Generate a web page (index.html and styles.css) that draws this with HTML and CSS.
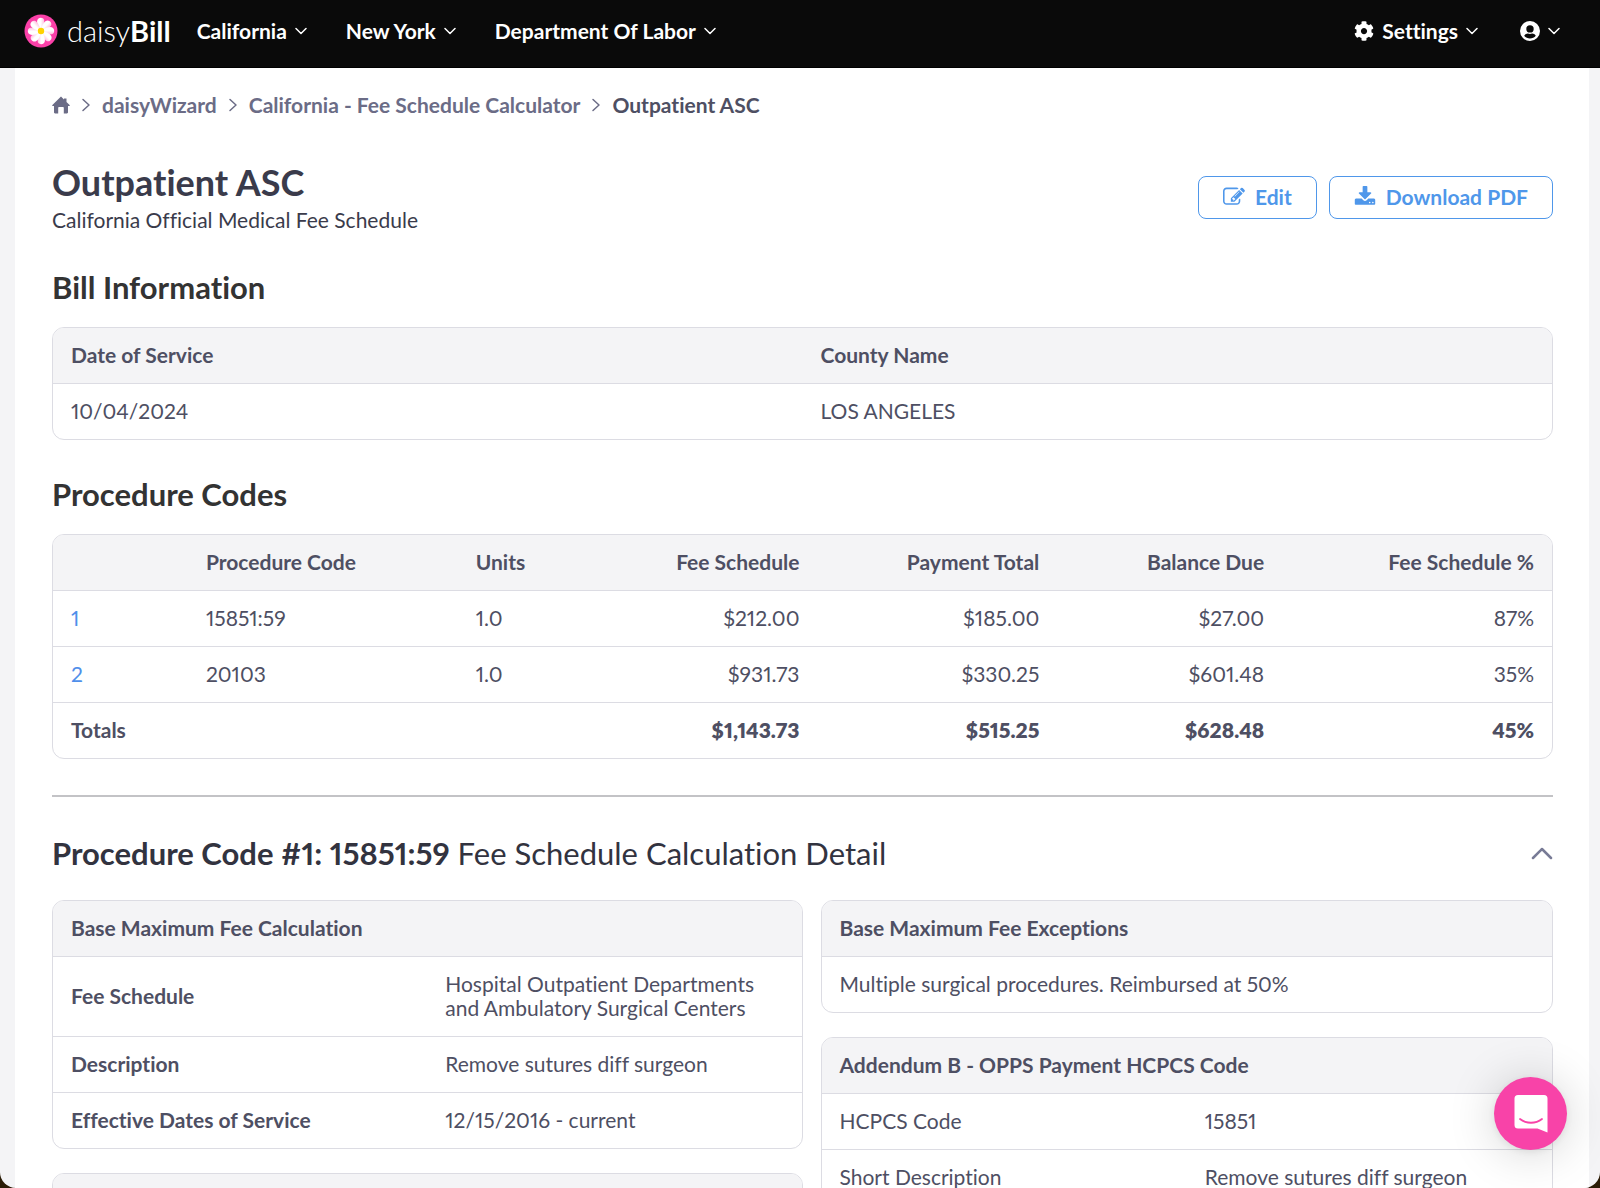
FILE: index.html
```html
<!DOCTYPE html>
<html lang="en">
<head>
<meta charset="utf-8">
<meta name="viewport" content="width=device-width, initial-scale=1">
<title>Outpatient ASC - daisyBill</title>
<link rel="stylesheet" href="styles.css">
</head>
<body>
<svg width="0" height="0" class="defs" aria-hidden="true">
  <symbol id="chevron-down" viewBox="0 0 12 12"><path d="M1 3.500l5 5 5-5" fill="none" stroke="currentColor" stroke-width="1.500" stroke-linecap="round" stroke-linejoin="round"/></symbol>
  <symbol id="chevron-right" viewBox="0 0 10 14"><path d="M2 1.500l6 5.500-6 5.500" fill="none" stroke="currentColor" stroke-width="1.500" stroke-linecap="round" stroke-linejoin="round"/></symbol>
</svg>
<div class="app">
  <header class="topbar">
    <a class="brand" href="#" aria-label="daisyBill">
      <svg class="brand-mark" viewBox="0 0 34 34" aria-hidden="true">
        <defs><linearGradient id="petal" x1="0" y1="0" x2="1" y2="0"><stop offset="0" stop-color="#fff"/><stop offset=".5" stop-color="#fff"/><stop offset="1" stop-color="#ffbfe0"/></linearGradient>
        <path id="leaf" d="M17 17C13 12 12 7 14.200 4.800C16 3.200 19.400 3.600 20.200 6C20.800 9 19.200 13.500 17 17z" fill="url(#petal)"/></defs>
        <circle cx="17" cy="17" r="16.500" fill="#fb40a8"/>
        <use href="#leaf"/><use href="#leaf" transform="rotate(45 17 17)"/><use href="#leaf" transform="rotate(90 17 17)"/><use href="#leaf" transform="rotate(135 17 17)"/><use href="#leaf" transform="rotate(180 17 17)"/><use href="#leaf" transform="rotate(225 17 17)"/><use href="#leaf" transform="rotate(270 17 17)"/><use href="#leaf" transform="rotate(315 17 17)"/>
        <circle cx="17" cy="17" r="3.200" fill="#ffd200"/>
      </svg>
      <span class="brand-name">daisy<b>Bill</b></span>
    </a>
    <nav class="menu menu-main" aria-label="Main">
      <button type="button" class="menu-item">California<svg class="caret"><use href="#chevron-down"/></svg></button>
      <button type="button" class="menu-item">New York<svg class="caret"><use href="#chevron-down"/></svg></button>
      <button type="button" class="menu-item">Department Of Labor<svg class="caret"><use href="#chevron-down"/></svg></button>
    </nav>
    <div class="menu">
      <button type="button" class="menu-item"><svg class="menu-icon" viewBox="0 0 512 512" aria-hidden="true"><path fill="currentColor" d="M487.400 315.700l-42.600-24.600c4.300-23.200 4.300-47 0-70.200l42.600-24.600c4.900-2.800 7.100-8.600 5.500-14-11.100-35.600-30-67.800-54.700-94.600-3.800-4.100-10-5.100-14.800-2.300L380.800 110c-17.900-15.400-38.500-27.300-60.800-35.100V25.800c0-5.600-3.900-10.500-9.400-11.700-36.700-8.200-74.300-7.800-109.200 0-5.500 1.200-9.400 6.100-9.400 11.700V75c-22.200 7.900-42.800 19.800-60.800 35.100L88.700 85.500c-4.900-2.800-11-1.900-14.800 2.300-24.700 26.700-43.600 58.900-54.700 94.600-1.700 5.400.6 11.200 5.500 14L67.300 221c-4.300 23.200-4.300 47 0 70.200l-42.600 24.600c-4.900 2.800-7.100 8.600-5.500 14 11.100 35.600 30 67.800 54.700 94.600 3.800 4.100 10 5.100 14.800 2.300l42.600-24.600c17.900 15.400 38.500 27.300 60.800 35.100v49.200c0 5.600 3.900 10.500 9.400 11.700 36.700 8.200 74.300 7.800 109.200 0 5.500-1.200 9.400-6.100 9.400-11.700v-49.200c22.200-7.900 42.800-19.800 60.800-35.100l42.600 24.600c4.900 2.800 11 1.900 14.800-2.300 24.700-26.700 43.600-58.900 54.700-94.600 1.500-5.500-.7-11.300-5.600-14.100zM256 336c-44.100 0-80-35.900-80-80s35.900-80 80-80 80 35.900 80 80-35.900 80-80 80z"/></svg>Settings<svg class="caret"><use href="#chevron-down"/></svg></button>
      <button type="button" class="menu-item" aria-label="Account"><svg class="menu-icon" viewBox="0 0 20 20" aria-hidden="true"><path fill="currentColor" fill-rule="evenodd" d="M10 0a10 10 0 1 0 0 20a10 10 0 0 0 0-20zM10 4.200a3.700 3.700 0 1 1 0 7.400a3.700 3.700 0 0 1 0-7.400zM4.200 14.700c.9-1.500 2.300-2.200 3.700-2.200c1.400.5 2.800.5 4.200 0c1.400 0 2.800.7 3.700 2.200c-2.800 3.600-8.800 3.600-11.600 0z"/></svg><svg class="caret"><use href="#chevron-down"/></svg></button>
    </div>
  </header>

  <main class="page">
    <nav class="crumbs" aria-label="Breadcrumb">
      <a href="#" aria-label="Home"><svg class="home" viewBox="0 0 18 18" aria-hidden="true"><path fill="currentColor" d="M9 .5L.4 9c-.5.500-.3 1 .3 1H2v6.300c0 .7.400 1.200 1.100 1.200h3.100V12c0-.6.400-1 1-1h3.600c.6 0 1 .4 1 1v5.500h3.100c.7 0 1.100-.5 1.100-1.200V10h1.300c.6 0 .8-.5.300-1L14.500 5.900V2.500H12v1z"/></svg></a>
      <svg class="sep"><use href="#chevron-right"/></svg>
      <a href="#">daisyWizard</a>
      <svg class="sep"><use href="#chevron-right"/></svg>
      <a href="#">California - Fee Schedule Calculator</a>
      <svg class="sep"><use href="#chevron-right"/></svg>
      <span class="current" aria-current="page">Outpatient ASC</span>
    </nav>

    <div class="title-row">
      <div>
        <h1>Outpatient ASC</h1>
        <p class="subtitle">California Official Medical Fee Schedule</p>
      </div>
      <div class="actions">
        <button type="button" class="btn"><svg class="btn-icon" viewBox="0 0 1792 1792" aria-hidden="true"><path fill="currentColor" d="M888 1184l116-116-152-152-116 116v56h96v96h56zm440-720q-16-16-33 1l-350 350q-17 17-1 33t33-1l350-350q17-17 1-33zm80 594v190q0 119-84.500 203.500t-203.500 84.500h-832q-119 0-203.500-84.500t-84.500-203.500v-832q0-119 84.500-203.500t203.500-84.500h832q63 0 117 25 15 7 18 23 3 17-9 29l-49 49q-14 14-32 8-23-6-45-6h-832q-66 0-113 47t-47 113v832q0 66 47 113t113 47h832q66 0 113-47t47-113v-126q0-13 9-22l64-64q15-15 35-7t20 29zm-96-738l288 288-672 672h-288v-288zm444 132l-92 92-288-288 92-92q28-28 68-28t68 28l152 152q28 28 28 68t-28 68z"/></svg>Edit</button>
        <button type="button" class="btn"><svg class="btn-icon" viewBox="0 0 1792 1792" aria-hidden="true"><path fill="currentColor" d="M1344 1344q0-26-19-45t-45-19-45 19-19 45 19 45 45 19 45-19 19-45zm256 0q0-26-19-45t-45-19-45 19-19 45 19 45 45 19 45-19 19-45zm128-224v320q0 40-28 68t-68 28h-1472q-40 0-68-28t-28-68v-320q0-40 28-68t68-28h465l135 136q58 56 136 56t136-56l136-136h464q40 0 68 28t28 68zm-325-569q17 41-14 70l-448 448q-18 19-45 19t-45-19l-448-448q-31-29-14-70 17-39 59-39h256v-448q0-26 19-45t45-19h256q26 0 45 19t19 45v448h256q42 0 59 39z"/></svg>Download PDF</button>
      </div>
    </div>

    <h2>Bill Information</h2>
    <div class="card">
      <table>
        <colgroup><col class="half"><col class="half"></colgroup>
        <thead><tr><th scope="col">Date of Service</th><th scope="col">County Name</th></tr></thead>
        <tbody><tr><td>10/04/2024</td><td>LOS ANGELES</td></tr></tbody>
      </table>
    </div>

    <h2>Procedure Codes</h2>
    <div class="card">
      <table>
        <colgroup><col class="c-line"><col class="c-code"><col class="c-units"><col class="c-fee"><col class="c-paid"><col class="c-due"><col class="c-share"></colgroup>
        <thead><tr><th scope="col" aria-label="Line"></th><th scope="col">Procedure Code</th><th scope="col">Units</th><th scope="col" class="num">Fee Schedule</th><th scope="col" class="num">Payment Total</th><th scope="col" class="num">Balance Due</th><th scope="col" class="num">Fee Schedule %</th></tr></thead>
        <tbody>
          <tr><td><a href="#code-1">1</a></td><td>15851:59</td><td>1.0</td><td class="num">$212.00</td><td class="num">$185.00</td><td class="num">$27.00</td><td class="num">87%</td></tr>
          <tr><td><a href="#code-2">2</a></td><td>20103</td><td>1.0</td><td class="num">$931.73</td><td class="num">$330.25</td><td class="num">$601.48</td><td class="num">35%</td></tr>
        </tbody>
        <tfoot><tr><th scope="row" colspan="3">Totals</th><td class="num">$1,143.73</td><td class="num">$515.25</td><td class="num">$628.48</td><td class="num">45%</td></tr></tfoot>
      </table>
    </div>

    <hr>

    <section id="code-1">
      <div class="detail-head">
        <h2><strong>Procedure Code #1: 15851:59</strong> Fee Schedule Calculation Detail</h2>
        <button type="button" class="toggle" aria-label="Collapse"><svg class="toggle-icon" viewBox="0 0 22 14" aria-hidden="true"><path d="M2 12l9-9 9 9" fill="none" stroke="currentColor" stroke-width="2.500" stroke-linecap="round" stroke-linejoin="round"/></svg></button>
      </div>
      <div class="detail-grid">
        <div class="stack">
          <div class="card">
            <table>
              <colgroup><col class="half"><col class="half"></colgroup>
              <thead><tr><th scope="col" colspan="2">Base Maximum Fee Calculation</th></tr></thead>
              <tbody>
                <tr><th scope="row">Fee Schedule</th><td>Hospital Outpatient Departments and Ambulatory Surgical Centers</td></tr>
                <tr><th scope="row">Description</th><td>Remove sutures diff surgeon</td></tr>
                <tr><th scope="row">Effective Dates of Service</th><td>12/15/2016 - current</td></tr>
              </tbody>
            </table>
          </div>
          <div class="card"><div class="card-bar"></div></div>
        </div>
        <div class="stack">
          <div class="card">
            <table>
              <thead><tr><th scope="col">Base Maximum Fee Exceptions</th></tr></thead>
              <tbody><tr><td>Multiple surgical procedures. Reimbursed at 50%</td></tr></tbody>
            </table>
          </div>
          <div class="card">
            <table>
              <colgroup><col class="half"><col class="half"></colgroup>
              <thead><tr><th scope="col" colspan="2">Addendum B - OPPS Payment HCPCS Code</th></tr></thead>
              <tbody>
                <tr><td>HCPCS Code</td><td>15851</td></tr>
                <tr><td>Short Description</td><td>Remove sutures diff surgeon</td></tr>
              </tbody>
            </table>
          </div>
        </div>
      </div>
    </section>
  </main>

  <button type="button" class="chat" aria-label="Open chat"><svg class="chat-icon" viewBox="0 0 34 38" aria-hidden="true"><path fill="#fff" d="M4 0h26a3.500 3.500 0 0 1 3.500 3.500V37.500L23.500 33.500H4A3.500 3.500 0 0 1 .5 30V3.500A3.500 3.500 0 0 1 4 0z"/><path d="M6 24c6.500 5 15.500 5 22 0" fill="none" stroke="#f843a8" stroke-width="1.800" stroke-linecap="round"/></svg></button>
</div>
</body>
</html>
```
FILE: styles.css
```css
* {
  box-sizing: border-box;
}

body {
  margin: 0;
  background: #2b1c06;
  color: #4e4f63;
  font: 21px/24px Lato, "Open Sans", sans-serif;
  font-variant-ligatures: none;
  font-variant-numeric: proportional-nums;
}

button {
  border: 0;
  background: none;
  padding: 0;
  color: inherit;
  font: inherit;
  font-variant-ligatures: none;
  cursor: pointer;
}

a {
  color: inherit;
  text-decoration: none;
}

svg {
  display: block;
  flex: none;
}

.defs {
  position: absolute;
}

.app {
  display: flex;
  flex-direction: column;
  height: 100vh;
  overflow: hidden;
  background: #f4f4f6;
  border-radius: 0 0 16px 16px;
}

/* Top bar */
.topbar {
  display: flex;
  flex: none;
  align-items: center;
  height: 68px;
  padding: 0 40px 5px 24px;
  background: #0a0a0a;
  border-bottom: 1px solid #000;
  color: #fff;
}

.brand {
  display: flex;
  align-items: center;
  gap: 9px;
  margin-right: 26px;
}

.brand-mark {
  width: 34px;
  height: 34px;
}

.brand-name {
  font-size: 29px;
  line-height: 32px;
  font-weight: 300;
}

.brand-name b {
  font-weight: 700;
}

.menu {
  display: flex;
  gap: 42px;
}

.menu-main {
  flex: 1;
  gap: 39px;
}

.menu-item {
  display: flex;
  align-items: center;
  gap: 8px;
  font-weight: 700;
}

.menu-icon {
  width: 20px;
  height: 20px;
}

.caret {
  width: 12px;
  height: 12px;
}

/* Page */
.page {
  flex: 1;
  min-height: 0;
  margin: 0 11px 0 15px;
  padding: 25px 36px 0 37px;
  overflow-y: auto;
  scrollbar-width: none;
  background: #fff;
}

.crumbs {
  display: flex;
  align-items: center;
  gap: 11px;
  color: #6b6c86;
  font-weight: 700;
}

.home {
  width: 18px;
  height: 18px;
}

.sep {
  width: 10px;
  height: 14px;
}

.current {
  color: #4e4f63;
}

.title-row {
  display: flex;
  align-items: center;
  justify-content: space-between;
  margin: 45px 0 37px;
}

h1,
h2,
p {
  margin: 0;
}

h1 {
  margin-bottom: 6px;
  color: #3a3b4b;
  font-size: 36px;
  line-height: 40px;
  font-weight: 700;
}

.subtitle {
  color: #3a3b4b;
}

.actions {
  display: flex;
  gap: 12px;
}

.btn {
  display: flex;
  align-items: center;
  gap: 10px;
  height: 43px;
  padding: 0 24px;
  border: 1px solid #4f97ea;
  border-radius: 8px;
  color: #4f97ea;
  font-weight: 700;
}

.btn-icon {
  width: 22px;
  height: 22px;
}

h2 {
  color: #333;
  font-size: 31px;
  line-height: 36px;
  font-weight: 700;
}

.card {
  overflow: hidden;
  border: 1px solid #dcdce3;
  border-radius: 12px;
}

h2 + .card {
  margin: 22px 0 36px;
}

.card-bar {
  height: 56px;
  background: #f4f4f6;
}

table {
  width: 100%;
  table-layout: fixed;
  border-collapse: collapse;
}

th,
td {
  padding: 15px 18px 16px;
  text-align: left;
}

th {
  font-weight: 700;
}

tr + tr > *,
tbody > tr > *,
tfoot > tr > * {
  border-top: 1px solid #dcdce3;
}

thead th {
  background: #f4f4f6;
}

tfoot td {
  font-weight: 800;
}

td a {
  color: #4f8fea;
}

.num {
  text-align: right;
}

.half {
  width: 50%;
}

.c-line {
  width: 9%;
}

.c-code {
  width: 18%;
}

.c-units {
  width: 9%;
}

.c-fee {
  width: 15%;
}

.c-paid {
  width: 16%;
}

.c-due {
  width: 15%;
}

.c-share {
  width: 18%;
}

hr {
  margin: 36px 0 38px;
  border: 0;
  border-top: 2px solid #c3c3c6;
}

.detail-head {
  display: flex;
  align-items: center;
  justify-content: space-between;
  margin-bottom: 29px;
}

.detail-head h2 {
  color: #32333f;
  font-weight: 400;
}

.detail-head strong {
  font-weight: 700;
}

.toggle {
  color: #787b96;
}

.toggle-icon {
  width: 22px;
  height: 14px;
}

.detail-grid {
  display: grid;
  grid-template-columns: 50% minmax(0, 1fr);
  gap: 18px;
}

.stack {
  display: flex;
  flex-direction: column;
  gap: 24px;
}

/* Chat launcher */
.chat {
  position: fixed;
  right: 33px;
  bottom: 38px;
  display: grid;
  place-items: center;
  width: 73px;
  height: 73px;
  border-radius: 50%;
  background: #f843a8;
  box-shadow: 0 2px 9px rgba(0, 0, 0, 0.08), 0 3px 48px rgba(0, 0, 0, 0.18);
}

.chat-icon {
  width: 34px;
  height: 38px;
}
```
